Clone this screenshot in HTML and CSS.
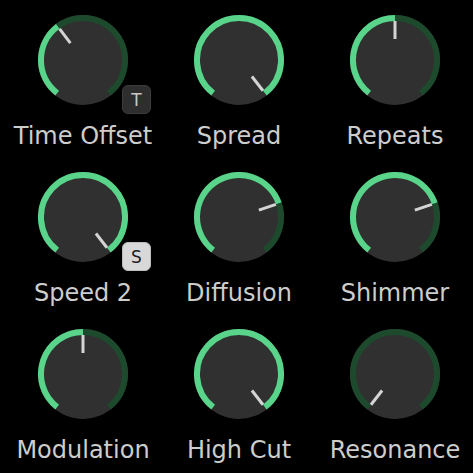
FILE: index.html
```html
<!DOCTYPE html>
<html lang="en">
<head>
    <meta charset="UTF-8">
    <title>Delay Knobs</title>
    <link rel="stylesheet" href="styles.css">
</head>
<body>
    <div class="panel" id="panel"></div>

    <script>
        const MIN_ANGLE = -142;
        const MAX_ANGLE = 142;

        const knobs = [
            { label: 'Time Offset', value: 0.37, badge: 'T', badgeStyle: 'dark' },
            { label: 'Spread', value: 1 },
            { label: 'Repeats', value: 0.5 },
            { label: 'Speed 2', value: 1, badge: 'S', badgeStyle: 'light' },
            { label: 'Diffusion', value: 0.75 },
            { label: 'Shimmer', value: 0.75 },
            { label: 'Modulation', value: 0.5 },
            { label: 'High Cut', value: 1 },
            { label: 'Resonance', value: 0 }
        ];

        // point on circle, angle measured clockwise from the top
        function polar(r, deg) {
            const rad = deg * Math.PI / 180;
            return [45 + r * Math.sin(rad), 45 - r * Math.cos(rad)];
        }

        function arc(r, from, to) {
            const a = polar(r, from);
            const b = polar(r, to);
            const large = (to - from) > 180 ? 1 : 0;
            return 'M' + a[0].toFixed(2) + ' ' + a[1].toFixed(2) +
                ' A' + r + ' ' + r + ' 0 ' + large + ' 1 ' + b[0].toFixed(2) + ' ' + b[1].toFixed(2);
        }

        function knobSvg(value) {
            const angle = MIN_ANGLE + (MAX_ANGLE - MIN_ANGLE) * value;
            const p1 = polar(21, angle);
            const p2 = polar(39, angle);
            let svg = '<svg class="dial" viewBox="0 0 90 90" width="90" height="90">';
            svg += '<circle class="disk" cx="45" cy="45" r="45"/>';
            svg += '<path class="track" d="' + arc(42, MIN_ANGLE, MAX_ANGLE) + '"/>';
            if (value > 0) {
                svg += '<path class="value" d="' + arc(42, MIN_ANGLE, angle) + '"/>';
            }
            svg += '<line class="pointer" x1="' + p1[0] + '" y1="' + p1[1] + '" x2="' + p2[0] + '" y2="' + p2[1] + '"/>';
            svg += '</svg>';
            return svg;
        }

        const panel = document.getElementById('panel');
        knobs.forEach(k => {
            const cell = document.createElement('div');
            cell.className = 'knob';
            let html = '<div class="dial-wrap">' + knobSvg(k.value);
            if (k.badge) {
                html += '<span class="badge badge-' + k.badgeStyle + '">' + k.badge + '</span>';
            }
            html += '</div><div class="label">' + k.label + '</div>';
            cell.innerHTML = html;
            panel.appendChild(cell);
        });
    </script>
</body>
</html>
```

FILE: styles.css
```css
body {
    margin: 0;
    background: #000;
    font-family: "DejaVu Sans", Verdana, sans-serif;
}

.panel {
    display: grid;
    grid-template-columns: 156px 156px 156px;
    row-gap: 22px;
    padding: 15px 0 0 5px;
}

.knob {
    display: flex;
    flex-direction: column;
    align-items: center;
}

.dial-wrap {
    position: relative;
    width: 90px;
    height: 90px;
}

.dial {
    display: block;
}

.disk {
    fill: #303030;
}

.track {
    fill: none;
    stroke: #1d4a2d;
    stroke-width: 6;
}

.value {
    fill: none;
    stroke: #5ad48a;
    stroke-width: 6;
}

.pointer {
    stroke: #d4d4d4;
    stroke-width: 3;
}

.label {
    margin-top: 17px;
    height: 28px;
    line-height: 28px;
    font-size: 24px;
    color: #cdcdcd;
    white-space: nowrap;
}

.badge {
    position: absolute;
    left: 84px;
    top: 70px;
    width: 29px;
    height: 29px;
    box-sizing: border-box;
    border-radius: 6px;
    display: flex;
    align-items: center;
    justify-content: center;
    font-size: 17px;
}

.badge-dark {
    background: #2e2e2e;
    border: 1px solid #3c3c3c;
    color: #c8c8c8;
}

.badge-light {
    background: #d8d8d8;
    border: 1px solid #bdbdbd;
    color: #1e1e1e;
}
```
